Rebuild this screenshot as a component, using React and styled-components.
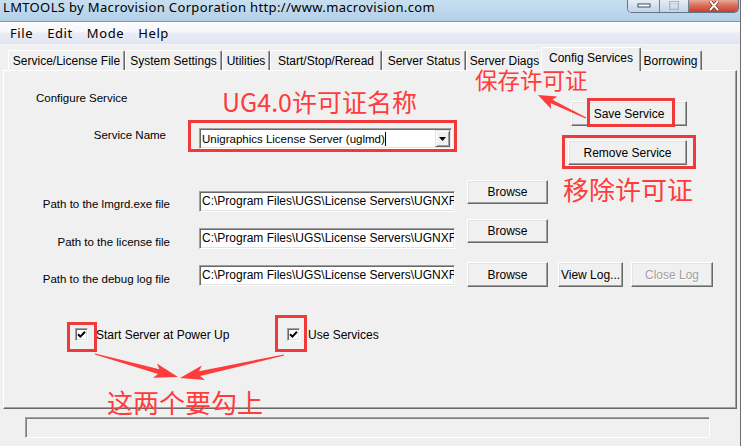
import React from "react";
import styled, { createGlobalStyle } from "styled-components";

const Global = createGlobalStyle`
  html, body { margin: 0; padding: 0; background: #f0f0f0; }
  body { width: 741px; height: 446px; overflow: hidden; }
  * { box-sizing: border-box; }
`;

const Window = styled.div`
  position: relative;
  width: 741px;
  height: 446px;
  overflow: hidden;
  background: #f0f0f0;
  font-family: "Liberation Sans", Arial, sans-serif;
  color: #000;
  display: flex;
  flex-direction: column;
  border-right: 1px solid #6d6d6d;
`;

const TitleBar = styled.div`
  flex: none;
  height: 22px;
  display: flex;
  justify-content: space-between;
  align-items: flex-start;
  background: linear-gradient(to bottom, #c8dff0 0%, #bcd7ec 55%, #b3d0e7 100%);
  border-bottom: 1px solid #7f95aa;
`;

const Title = styled.div`
  font-family: "Noto Sans", "Liberation Sans", sans-serif;
  font-size: 13px;
  letter-spacing: 0.35px;
  line-height: 14px;
  padding: 0 0 0 3px;
  white-space: nowrap;
`;

const Controls = styled.div`
  display: flex;
  height: 13px;
  margin-right: 1px;
  border: 1px solid #5f7288;
  border-top: none;
  border-radius: 0 0 5px 5px;
  overflow: hidden;
`;

const CtrlBtn = styled.div`
  width: ${(p) => p.$w}px;
  height: 100%;
  display: flex;
  align-items: center;
  justify-content: center;
  background: ${(p) =>
    p.$close
      ? "linear-gradient(to bottom, #e9a795 0%, #d86a57 50%, #c7402c 100%)"
      : "linear-gradient(to bottom, #e6eef6 0%, #d3e0ec 50%, #c3d4e4 100%)"};
  border-left: ${(p) => (p.$first ? "none" : "1px solid #6f8298")};
`;

const MenuBar = styled.div`
  flex: none;
  height: 23px;
  display: flex;
  align-items: center;
  gap: 14px;
  padding: 0 0 0 10px;
  background: linear-gradient(to bottom, #fcfcfe 0%, #f6f7fb 45%, #e9ecf5 50%, #e2e6f2 100%);
  border-bottom: 1px solid #f4f5f9;
  font-family: "Noto Sans", "Liberation Sans", sans-serif;
  font-size: 13px;
  letter-spacing: 0.6px;
`;

const MenuItem = styled.span`
  line-height: 16px;
  padding-top: 0px;
`;

const TabStrip = styled.div`
  flex: none;
  height: 25px;
  display: flex;
  align-items: flex-end;
  padding-left: 8px;
  position: relative;
  z-index: 2;
`;

const Tab = styled.div`
  width: ${(p) => p.$w}px;
  height: ${(p) => (p.$active ? 24 : 20)}px;
  margin: 0 ${(p) => (p.$active ? -2 : 0)}px ${(p) => (p.$active ? -1 : 0)}px;
  display: flex;
  align-items: ${(p) => (p.$active ? "flex-start" : "center")};
  padding-top: ${(p) => (p.$active ? 3 : 1)}px;
  justify-content: center;
  font-size: 12px;
  white-space: nowrap;
  background: #f0f0f0;
  border-top: 1px solid #fff;
  border-left: 1px solid #fff;
  border-right: 1px solid #696969;
  box-shadow: inset -1px 0 #a0a0a0;
  border-radius: 2px 2px 0 0;
  position: relative;
  z-index: ${(p) => (p.$active ? 3 : 1)};
`;

const Panel = styled.div`
  flex: none;
  height: 339px;
  margin: 0 3px 0 3px;
  border: 1px solid;
  border-color: #fff #696969 #696969 #fff;
  box-shadow: inset -1px -1px #a0a0a0;
  display: flex;
  flex-direction: column;
  font-size: 11.5px;
`;

const TopSection = styled.div`
  display: flex;
  justify-content: space-between;
  padding-right: 49px;
`;

const LeftCol = styled.div`
  display: flex;
  flex-direction: column;
  padding-left: 32px;
`;

const RightCol = styled.div`
  display: flex;
  flex-direction: column;
  align-items: flex-end;
  margin-top: 30px;
  gap: 14px;
`;

const Caption = styled.div`
  line-height: 14px;
  margin-top: ${(p) => p.$top || 0}px;
  white-space: nowrap;
`;

const NameRow = styled.div`
  display: flex;
  align-items: flex-start;
  margin-top: 23px;
`;

const NameLabel = styled.div`
  width: 130px;
  text-align: right;
  line-height: 14px;
  white-space: nowrap;
`;

const Combo = styled.div`
  margin-left: 33px;
  width: 253px;
  height: 21px;
  background: #fff;
  border: 1px solid;
  border-color: #a0a0a0 #fff #fff #a0a0a0;
  box-shadow: inset 1px 1px #696969, inset -1px -1px #e3e3e3;
  display: flex;
  align-items: center;
  justify-content: space-between;
  padding: 0 1px 0 2px;
`;

const ComboText = styled.span`
  white-space: nowrap;
  line-height: 14px;
  border-right: 1px solid #000;
  padding-right: 0;
`;

const DropBtn = styled.div`
  width: 15px;
  height: 17px;
  background: #f0f0f0;
  border: 1px solid;
  border-color: #e3e3e3 #696969 #696969 #e3e3e3;
  box-shadow: inset 1px 1px #fff, inset -1px -1px #a0a0a0;
  display: flex;
  align-items: center;
  justify-content: center;
`;

const Button = styled.div`
  width: ${(p) => p.$w}px;
  height: ${(p) => p.$h || 25}px;
  margin-left: ${(p) => p.$ml || 0}px;
  margin-top: ${(p) => p.$top || 0}px;
  flex: none;
  display: flex;
  align-items: center;
  justify-content: center;
  background: #f0f0f0;
  border: 1px solid;
  border-color: #fff #696969 #696969 #fff;
  box-shadow: inset -1px -1px #a0a0a0, inset 1px 1px #e3e3e3;
  white-space: nowrap;
  font-size: 12px;
  color: ${(p) => (p.$disabled ? "#a0a0a0" : "#000")};
  text-shadow: ${(p) => (p.$disabled ? "1px 1px #fff" : "none")};
`;

const PathList = styled.div`
  display: flex;
  flex-direction: column;
  margin-top: 15px;
`;

const PathRow = styled.div`
  display: flex;
  align-items: flex-start;
  margin-top: ${(p) => p.$gap}px;
`;

const PathLabel = styled.div`
  width: 166px;
  text-align: right;
  line-height: 14px;
  white-space: nowrap;
  margin-top: ${(p) => p.$top}px;
`;

const TextBox = styled.div`
  margin-left: 29px;
  margin-top: ${(p) => p.$top}px;
  width: 256px;
  height: 21px;
  flex: none;
  background: #fff;
  border: 1px solid;
  border-color: #a0a0a0 #fff #fff #a0a0a0;
  box-shadow: inset 1px 1px #696969, inset -1px -1px #e3e3e3;
  overflow: hidden;
  white-space: nowrap;
  line-height: 19px;
  padding-left: 2px;
  font-size: 12px;
`;

const CheckRow = styled.div`
  display: flex;
  align-items: flex-start;
  margin-top: 41px;
  padding-left: 71px;
`;

const CheckItem = styled.div`
  width: ${(p) => p.$w}px;
  display: flex;
  align-items: flex-start;
  gap: 8px;
`;

const Box = styled.div`
  width: 13px;
  height: 13px;
  background: #fff;
  border: 1px solid;
  border-color: #a0a0a0 #fff #fff #a0a0a0;
  box-shadow: inset 1px 1px #696969, inset -1px -1px #e3e3e3;
  display: flex;
  align-items: center;
  justify-content: center;
`;

const CheckLabel = styled.span`
  line-height: 14px;
  white-space: nowrap;
  font-size: 12px;
`;

const StatusBar = styled.div`
  flex: none;
  margin: 8px 0 0 25px;
  width: 685px;
  height: 21px;
  border: 1px solid;
  border-color: #a0a0a0 #fff #fff #a0a0a0;
  box-shadow: inset 1px 1px #808080;
`;

const Overlay = styled.div`
  position: absolute;
  inset: 0;
  pointer-events: none;
  z-index: 10;
`;

const RedBox = styled.div`
  position: absolute;
  border: 3px solid #f03a3a;
`;

const RedText = styled.div`
  position: absolute;
  color: #ff3b3b;
  font-family: "Noto Sans CJK SC", "Noto Sans", sans-serif;
  font-weight: 400;
  line-height: 1;
  white-space: nowrap;
`;

const ArrowLayer = styled.svg`
  position: absolute;
  left: 0;
  top: 0;
`;

function arrowPoints(tx, ty, hx, hy, shaft, headW, headL, barb) {
  const dx = hx - tx;
  const dy = hy - ty;
  const len = Math.hypot(dx, dy);
  const ux = dx / len;
  const uy = dy / len;
  const px = -uy;
  const py = ux;
  const bx = hx - ux * headL;
  const by = hy - uy * headL;
  const pts = [
    [tx + px * 0.6, ty + py * 0.6],
    [bx + px * shaft / 2, by + py * shaft / 2],
    [bx - ux * barb + px * headW / 2, by - uy * barb + py * headW / 2],
    [hx, hy],
    [bx - ux * barb - px * headW / 2, by - uy * barb - py * headW / 2],
    [bx - px * shaft / 2, by - py * shaft / 2],
    [tx - px * 0.6, ty - py * 0.6],
  ];
  return pts.map((p) => p.map((v) => v.toFixed(1)).join(",")).join(" ");
}

const tabs = [
  { label: "Service/License File", w: 117 },
  { label: "System Settings", w: 97 },
  { label: "Utilities", w: 48 },
  { label: "Start/Stop/Reread", w: 112 },
  { label: "Server Status", w: 84 },
  { label: "Server Diags", w: 77 },
  { label: "Config Services", w: 100, active: true },
  { label: "Borrowing", w: 63 },
];

const paths = [
  { label: "Path to the lmgrd.exe file", gap: 0, lt: 17, tt: 11, bt: 0, bh: 24 },
  { label: "Path to the license file", gap: 7, lt: 16, tt: 9, bt: 0, bh: 24 },
  { label: "Path to the debug log file", gap: 12, lt: 11, tt: 4, bt: 1, bh: 25, log: true },
];

const pathValue = "C:\\Program Files\\UGS\\License Servers\\UGNXFLEX\\lmgrd.exe";

const Check = () => (
  <Box>
    <svg width="9" height="9" viewBox="0 0 9 9">
      <polyline points="1,4.2 3.4,6.6 8,1.8" fill="none" stroke="#000" strokeWidth="2" />
    </svg>
  </Box>
);

export default function App() {
  return (
    <>
      <Global />
      <Window>
        <TitleBar>
          <Title>LMTOOLS by Macrovision Corporation http://www.macrovision.com</Title>
          <Controls>
            <CtrlBtn $w={31} $first>
              <svg width="14" height="6" viewBox="0 0 14 6">
                <rect x="1" y="1" width="12" height="3" fill="#fff" stroke="#3b4c60" strokeWidth="1" />
              </svg>
            </CtrlBtn>
            <CtrlBtn $w={29}>
              <svg width="12" height="10" viewBox="0 0 12 10">
                <rect x="1.5" y="0.5" width="9" height="8" fill="none" stroke="#a9b6c4" strokeWidth="1" />
                <rect x="2.5" y="2.5" width="7" height="5" fill="none" stroke="#c8d2dd" strokeWidth="1" />
              </svg>
            </CtrlBtn>
            <CtrlBtn $w={50} $close>
              <svg width="14" height="10" viewBox="0 0 14 10">
                <path d="M3 0 L11 9 M11 0 L3 9" stroke="#5a1a12" strokeWidth="3.2" />
                <path d="M3 0 L11 9 M11 0 L3 9" stroke="#fff" strokeWidth="2" />
              </svg>
            </CtrlBtn>
          </Controls>
        </TitleBar>

        <MenuBar>
          <MenuItem>File</MenuItem>
          <MenuItem>Edit</MenuItem>
          <MenuItem>Mode</MenuItem>
          <MenuItem>Help</MenuItem>
        </MenuBar>

        <TabStrip>
          {tabs.map((t) => (
            <Tab key={t.label} $w={t.w} $active={t.active}>
              {t.label}
            </Tab>
          ))}
        </TabStrip>

        <Panel>
          <TopSection>
            <LeftCol>
              <Caption $top={20}>Configure Service</Caption>
              <NameRow>
                <NameLabel>Service Name</NameLabel>
                <Combo>
                  <ComboText>Unigraphics License Server (uglmd)</ComboText>
                  <DropBtn>
                    <svg width="7" height="4" viewBox="0 0 7 4">
                      <path d="M0 0 H7 L3.5 4 Z" fill="#000" />
                    </svg>
                  </DropBtn>
                </Combo>
              </NameRow>
            </LeftCol>
            <RightCol>
              <Button $w={116}>Save Service</Button>
              <Button $w={119}>Remove Service</Button>
            </RightCol>
          </TopSection>

          <PathList>
            {paths.map((p) => (
              <PathRow key={p.label} $gap={p.gap}>
                <PathLabel $top={p.lt}>{p.label}</PathLabel>
                <TextBox $top={p.tt}>{pathValue}</TextBox>
                <Button $w={81} $h={p.bh} $ml={12} $top={p.bt}>
                  Browse
                </Button>
                {p.log && (
                  <>
                    <Button $w={65} $ml={10} $top={p.bt}>
                      View Log...
                    </Button>
                    <Button $w={82} $ml={8} $top={p.bt} $disabled>
                      Close Log
                    </Button>
                  </>
                )}
              </PathRow>
            ))}
          </PathList>

          <CheckRow>
            <CheckItem $w={212}>
              <Check />
              <CheckLabel>Start Server at Power Up</CheckLabel>
            </CheckItem>
            <CheckItem $w={120}>
              <Check />
              <CheckLabel>Use Services</CheckLabel>
            </CheckItem>
          </CheckRow>
        </Panel>

        <StatusBar />

        <Overlay>
          <RedBox style={{ left: 188, top: 120, width: 269, height: 32 }} />
          <RedBox style={{ left: 587, top: 98, width: 88, height: 29 }} />
          <RedBox style={{ left: 562, top: 135, width: 134, height: 34 }} />
          <RedBox style={{ left: 67, top: 322, width: 30, height: 30 }} />
          <RedBox style={{ left: 275, top: 315, width: 32, height: 37 }} />

          <RedText style={{ left: 222, top: 89, fontSize: 25 }}>UG4.0许可证名称</RedText>
          <RedText style={{ left: 475, top: 68, fontSize: 22.5 }}>保存许可证</RedText>
          <RedText style={{ left: 563, top: 176, fontSize: 26 }}>移除许可证</RedText>
          <RedText style={{ left: 107, top: 389, fontSize: 26 }}>这两个要勾上</RedText>

          <ArrowLayer width="741" height="446" viewBox="0 0 741 446">
            <polygon points={arrowPoints(586, 118, 538, 95, 4, 14, 15, 3)} fill="#ff3b3b" />
            <polygon points={arrowPoints(95, 354, 178, 377, 5, 15, 20, 4)} fill="#ff3b3b" />
            <polygon points={arrowPoints(284, 355, 180, 378, 5, 15, 20, 4)} fill="#ff3b3b" />
          </ArrowLayer>
        </Overlay>
      </Window>
    </>
  );
}
